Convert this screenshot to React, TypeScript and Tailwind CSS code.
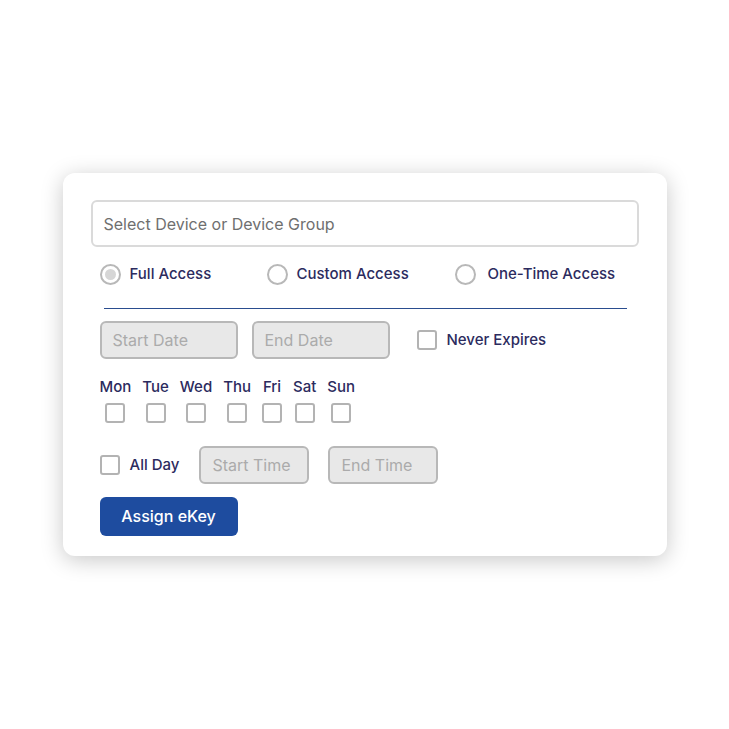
import React from "react";

const days = ["Mon", "Tue", "Wed", "Thu", "Fri", "Sat", "Sun"];

function Radio({ label, checked, width, gap }: { label: string; checked?: boolean; width: string; gap: string }) {
  return (
    <label className={`flex items-center ${gap} ${width}`}>
      <span className="flex h-[21px] w-[21px] items-center justify-center rounded-full border-2 border-[#b8b8b8] bg-white">
        {checked && <span className="h-[11px] w-[11px] rounded-full bg-[#d6d6d6]" />}
      </span>
      <span className="text-[15px] font-medium text-[#2c2b5e]">{label}</span>
    </label>
  );
}

function Box() {
  return <span className="block h-[20px] w-[20px] rounded-[3px] border-2 border-[#b3b3b3] bg-white" />;
}

function Field({ placeholder, width }: { placeholder: string; width: string }) {
  return (
    <div
      className={`flex h-[38px] ${width} items-center rounded-[6px] border-2 border-[#b8b8b8] bg-[#e8e8e8] px-[11px] text-[16px] text-[#ababab]`}
    >
      {placeholder}
    </div>
  );
}

export default function App() {
  return (
    <div
      className="flex min-h-screen items-center justify-center bg-white"
      style={{ fontFamily: "Inter, 'Noto Sans', sans-serif" }}
    >
      <div className="w-[604px] rounded-[12px] bg-white px-[28px] pt-[27px] pb-[20px] shadow-[0_4px_22px_rgba(0,0,0,0.22)]">
        <div className="flex h-[47px] items-center rounded-[6px] border-2 border-[#dadada] px-[11px] text-[16px] text-[#6f6f6f]">
          Select Device or Device Group
        </div>

        <div className="px-[9px]">
          <div className="mt-[16px] flex items-center">
            <Radio label="Full Access" checked width="w-[167px]" gap="gap-[9px]" />
            <Radio label="Custom Access" width="w-[188px]" gap="gap-[9px]" />
            <Radio label="One-Time Access" width="" gap="gap-[12px]" />
          </div>

          <div className="mt-[22px] ml-[4px] h-px w-[523px] bg-[#2a4d8f]" />

          <div className="mt-[12px] flex items-center">
            <Field placeholder="Start Date" width="w-[138px]" />
            <div className="ml-[14px]">
              <Field placeholder="End Date" width="w-[138px]" />
            </div>
            <div className="ml-[27px] flex items-center gap-[10px]">
              <Box />
              <span className="text-[15px] font-medium text-[#2c2b5e]">Never Expires</span>
            </div>
          </div>

          <div className="mt-[18px] flex gap-[11px]">
            {days.map((d) => (
              <div key={d} className="flex flex-col items-center gap-[6px]">
                <span className="text-[15px] font-medium leading-[20px] text-[#2c2b5e]">{d}</span>
                <Box />
              </div>
            ))}
          </div>

          <div className="mt-[23px] flex items-center">
            <Box />
            <span className="ml-[10px] text-[15px] font-medium text-[#2c2b5e]">All Day</span>
            <div className="ml-[20px]">
              <Field placeholder="Start Time" width="w-[110px]" />
            </div>
            <div className="ml-[19px]">
              <Field placeholder="End Time" width="w-[110px]" />
            </div>
          </div>

          <button className="mt-[13px] flex h-[39px] w-[138px] items-center justify-center rounded-[6px] bg-[#1e4c9f] text-[16px] font-medium text-white">
            Assign eKey
          </button>
        </div>
      </div>
    </div>
  );
}
